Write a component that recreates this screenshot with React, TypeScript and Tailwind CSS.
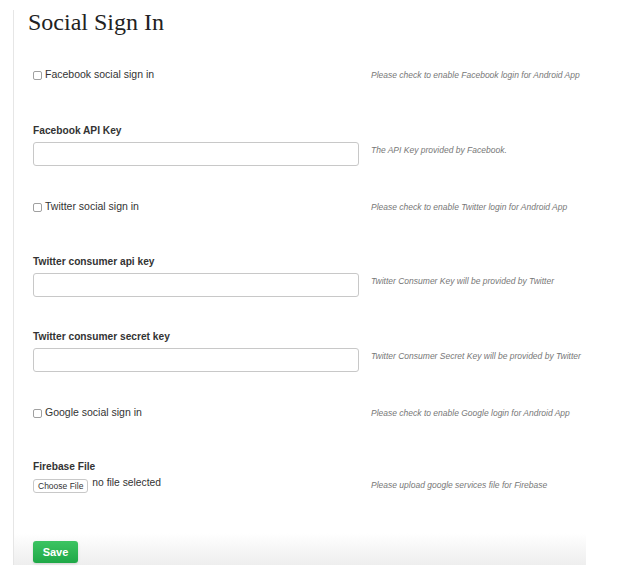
import React from "react";

const sans = { fontFamily: '"Liberation Sans", Arial, sans-serif' };

function Check({ label, help }: { label: string; help: string }) {
  return (
    <div className="flex items-center h-[20px]">
      <label className="flex items-center w-[338px] text-[10.5px] text-[#333]">
        <input
          type="checkbox"
          className="appearance-none w-[9px] h-[9px] border border-[#a0a0a0] rounded-[2px] bg-white mr-[3px]"
        />
        {label}
      </label>
      <span className="text-[8.5px] italic text-[#777]">{help}</span>
    </div>
  );
}

function Field({ label, help, mt }: { label: string; help: string; mt: string }) {
  return (
    <div className={mt}>
      <div className="text-[10.2px] font-bold text-[#333] leading-[14px]">{label}</div>
      <div className="flex items-start mt-[4px]">
        <input
          type="text"
          className="w-[326px] h-[24px] border border-[#c8c8c8] rounded-[3px] bg-white"
        />
        <span className="ml-[12px] mt-[3px] leading-[11px] text-[8.5px] italic text-[#777]">{help}</span>
      </div>
    </div>
  );
}

export default function App() {
  return (
    <div className="w-[624px] h-[576px] bg-white pt-[10px]" style={sans}>
      <div className="w-[573px] h-[555px] ml-[13px] border-l border-[#e6e6e6] flex flex-col">
        <h1
          className="pl-[14px] h-[24px] text-[24px] leading-[24px] text-[#222]"
          style={{ fontFamily: '"Liberation Serif", Georgia, serif' }}
        >
          Social Sign In
        </h1>
        <div className="pl-[19px] flex flex-col flex-1">
          <div className="mt-[31px]">
            <Check label="Facebook social sign in" help="Please check to enable Facebook login for Android App" />
          </div>
          <Field label="Facebook API Key" help="The API Key provided by Facebook." mt="mt-[39px]" />
          <div className="mt-[31px]">
            <Check label="Twitter social sign in" help="Please check to enable Twitter login for Android App" />
          </div>
          <Field label="Twitter consumer api key" help="Twitter Consumer Key will be provided by Twitter" mt="mt-[38px]" />
          <Field label="Twitter consumer secret key" help="Twitter Consumer Secret Key will be provided by Twitter" mt="mt-[33px]" />
          <div className="mt-[31px]">
            <Check label="Google social sign in" help="Please check to enable Google login for Android App" />
          </div>
          <div className="mt-[37px]">
            <div className="text-[10.2px] font-bold text-[#333] leading-[14px]">Firebase File</div>
            <div className="flex items-start mt-[5px]">
              <div className="w-[338px] flex items-start">
                <button className="h-[14px] px-[4px] border border-[#c8c8c8] rounded-[3px] bg-white text-[8.5px] leading-[12px] text-[#333]">
                  Choose File
                </button>
                <span className="ml-[4px] text-[10.3px] leading-[12px] -mt-[2px] text-[#333]">no file selected</span>
              </div>
              <span className="mt-[1px] leading-[11px] text-[8.5px] italic text-[#777]">
                Please upload google services file for Firebase
              </span>
            </div>
          </div>
        </div>
        <div className="h-[32px] pl-[19px] pt-[6px] bg-gradient-to-b from-white to-[#eeeeee]">
          <button className="w-[45px] h-[22px] rounded-[3px] bg-gradient-to-b from-[#3cc462] to-[#1ea847] text-white text-[11px] font-bold shadow-sm">
            Save
          </button>
        </div>
      </div>
    </div>
  );
}
